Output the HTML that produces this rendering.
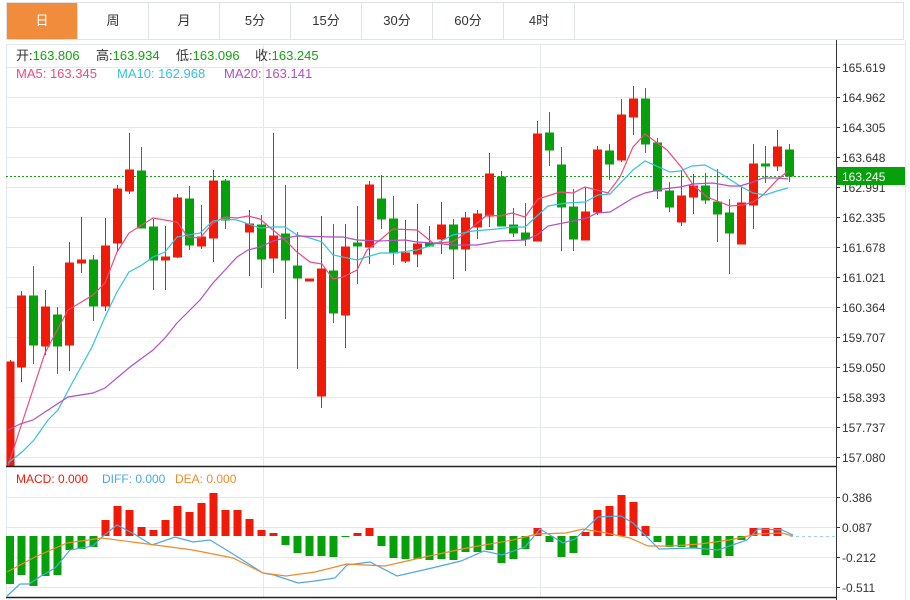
<!DOCTYPE html>
<html><head><meta charset="utf-8"><style>
body{margin:0;width:910px;height:600px;background:#fff;overflow:hidden;font-family:"Liberation Sans","Noto Sans CJK SC",sans-serif}
.tabs{position:absolute;left:6px;top:2px;height:38px;width:898px;border:1px solid #dfe3e8;border-bottom:1px solid #dfe3e8;display:flex;box-sizing:border-box}
.tab{width:70px;border-right:1px solid #dfe3e8;text-align:center;line-height:36px;font-size:13px;color:#333}
.tab.on{background:#f28c3d;color:#fff}
svg{position:absolute;left:0;top:0}
</style></head><body>
<div class="tabs"><div class="tab on">日</div><div class="tab">周</div><div class="tab">月</div><div class="tab">5分</div><div class="tab">15分</div><div class="tab">30分</div><div class="tab">60分</div><div class="tab">4时</div></div>
<svg width="910" height="600" xmlns="http://www.w3.org/2000/svg" font-family="Liberation Sans, Noto Sans CJK SC, sans-serif">
<g stroke="#e3e8ee" stroke-width="1">
<line x1="905.5" y1="40" x2="905.5" y2="600"/>
<line x1="6" y1="44.5" x2="905" y2="44.5"/>
<line x1="6" y1="67.5" x2="836" y2="67.5"/><line x1="6" y1="97.5" x2="836" y2="97.5"/><line x1="6" y1="127.5" x2="836" y2="127.5"/><line x1="6" y1="157.5" x2="836" y2="157.5"/><line x1="6" y1="187.5" x2="836" y2="187.5"/><line x1="6" y1="217.5" x2="836" y2="217.5"/><line x1="6" y1="247.5" x2="836" y2="247.5"/><line x1="6" y1="277.5" x2="836" y2="277.5"/><line x1="6" y1="307.5" x2="836" y2="307.5"/><line x1="6" y1="337.5" x2="836" y2="337.5"/><line x1="6" y1="367.5" x2="836" y2="367.5"/><line x1="6" y1="397.5" x2="836" y2="397.5"/><line x1="6" y1="427.5" x2="836" y2="427.5"/><line x1="6" y1="457.5" x2="836" y2="457.5"/>
<line x1="6" y1="497.5" x2="836" y2="497.5"/><line x1="6" y1="527.5" x2="836" y2="527.5"/><line x1="6" y1="557.5" x2="836" y2="557.5"/><line x1="6" y1="587.5" x2="836" y2="587.5"/>
<line x1="263.5" y1="44" x2="263.5" y2="597"/><line x1="540.5" y1="44" x2="540.5" y2="597"/>
<line x1="6.5" y1="44" x2="6.5" y2="597"/>
</g>
<g font-size="13" fill="#333">
<text x="16" y="60">开:<tspan fill="#13a113">163.806</tspan></text>
<text x="96" y="60">高:<tspan fill="#13a113">163.934</tspan></text>
<text x="176" y="60">低:<tspan fill="#13a113">163.096</tspan></text>
<text x="255" y="60">收:<tspan fill="#13a113">163.245</tspan></text>
<text x="16" y="78" fill="#ee4a7e">MA5: 163.345</text>
<text x="117" y="78" fill="#35c2dd">MA10: 162.968</text>
<text x="224" y="78" fill="#b14fc3">MA20: 163.141</text>
</g>
<line x1="6" y1="176.5" x2="836" y2="176.5" stroke="#13a113" stroke-dasharray="2,2"/>
<g stroke="#f01a08" fill="#f01a08">
<line x1="10.5" y1="360" x2="10.5" y2="466"/><rect x="7" y="362" width="7" height="104"/>
<line x1="21.5" y1="291" x2="21.5" y2="382"/><rect x="17.5" y="296" width="8" height="71"/>
<line x1="45.5" y1="290" x2="45.5" y2="355"/><rect x="41.5" y="307" width="8" height="39"/>
<line x1="69.5" y1="242" x2="69.5" y2="371"/><rect x="65.5" y="263" width="8" height="82"/>
<line x1="81.5" y1="217" x2="81.5" y2="273"/><rect x="77.5" y="260" width="8" height="3"/>
<line x1="105.5" y1="218" x2="105.5" y2="311"/><rect x="101.5" y="246" width="8" height="60"/>
<line x1="117.5" y1="185" x2="117.5" y2="252"/><rect x="113.5" y="189" width="8" height="54"/>
<line x1="129.5" y1="133" x2="129.5" y2="194"/><rect x="125.5" y="170" width="8" height="21"/>
<line x1="165.5" y1="226" x2="165.5" y2="290"/><rect x="161.5" y="257" width="8" height="3"/>
<line x1="177.5" y1="194" x2="177.5" y2="258"/><rect x="173.5" y="198" width="8" height="59"/>
<line x1="201.5" y1="205" x2="201.5" y2="249"/><rect x="197.5" y="237" width="8" height="9"/>
<line x1="213.5" y1="170" x2="213.5" y2="262"/><rect x="209.5" y="181" width="8" height="57"/>
<line x1="249.5" y1="210" x2="249.5" y2="276"/><rect x="245.5" y="224" width="8" height="8"/>
<line x1="273.5" y1="133" x2="273.5" y2="273"/><rect x="269.5" y="236" width="8" height="22"/>
<rect x="305.5" y="279" width="8" height="2"/>
<line x1="321.5" y1="216" x2="321.5" y2="408"/><rect x="317.5" y="269" width="8" height="127"/>
<line x1="345.5" y1="224" x2="345.5" y2="348"/><rect x="341.5" y="247" width="8" height="68"/>
<line x1="369.5" y1="181" x2="369.5" y2="264"/><rect x="365.5" y="185" width="8" height="62"/>
<line x1="405.5" y1="220" x2="405.5" y2="263"/><rect x="401.5" y="253" width="8" height="8"/>
<line x1="417.5" y1="204" x2="417.5" y2="267"/><rect x="413.5" y="244" width="8" height="10"/>
<line x1="441.5" y1="202" x2="441.5" y2="254"/><rect x="437.5" y="225" width="8" height="14"/>
<line x1="465.5" y1="212" x2="465.5" y2="271"/><rect x="461.5" y="218" width="8" height="31"/>
<line x1="477.5" y1="210" x2="477.5" y2="239"/><rect x="473.5" y="214" width="8" height="13"/>
<line x1="489.5" y1="153" x2="489.5" y2="227"/><rect x="485.5" y="174" width="8" height="42"/>
<line x1="537.5" y1="121" x2="537.5" y2="241"/><rect x="533.5" y="134" width="8" height="107"/>
<line x1="585.5" y1="187" x2="585.5" y2="240"/><rect x="581.5" y="212" width="8" height="28"/>
<line x1="597.5" y1="146" x2="597.5" y2="215"/><rect x="593.5" y="150" width="8" height="62"/>
<line x1="621.5" y1="99" x2="621.5" y2="162"/><rect x="617.5" y="115" width="8" height="45"/>
<line x1="633.5" y1="86" x2="633.5" y2="135"/><rect x="629.5" y="99" width="8" height="18"/>
<line x1="681.5" y1="170" x2="681.5" y2="226"/><rect x="677.5" y="196" width="8" height="26"/>
<line x1="693.5" y1="174" x2="693.5" y2="214"/><rect x="689.5" y="186" width="8" height="11"/>
<line x1="741.5" y1="187" x2="741.5" y2="244"/><rect x="737.5" y="203" width="8" height="41"/>
<line x1="753.5" y1="144" x2="753.5" y2="229"/><rect x="749.5" y="164" width="8" height="41"/>
<line x1="777.5" y1="130" x2="777.5" y2="171"/><rect x="773.5" y="147" width="8" height="19"/>
</g>
<g stroke="#06a10a" fill="#06a10a">
<line x1="33.5" y1="266" x2="33.5" y2="364"/><rect x="29.5" y="296" width="8" height="49"/>
<line x1="57.5" y1="307" x2="57.5" y2="374"/><rect x="53.5" y="315" width="8" height="31"/>
<line x1="93.5" y1="255" x2="93.5" y2="321"/><rect x="89.5" y="260" width="8" height="46"/>
<line x1="141.5" y1="147" x2="141.5" y2="228"/><rect x="137.5" y="171" width="8" height="57"/>
<line x1="153.5" y1="219" x2="153.5" y2="290"/><rect x="149.5" y="227" width="8" height="33"/>
<line x1="189.5" y1="186" x2="189.5" y2="250"/><rect x="185.5" y="199" width="8" height="46"/>
<line x1="225.5" y1="179" x2="225.5" y2="229"/><rect x="221.5" y="181" width="8" height="39"/>
<line x1="261.5" y1="215" x2="261.5" y2="288"/><rect x="257.5" y="225" width="8" height="34"/>
<line x1="285.5" y1="185" x2="285.5" y2="319"/><rect x="281.5" y="234" width="8" height="26"/>
<line x1="297.5" y1="232" x2="297.5" y2="369"/><rect x="293.5" y="266" width="8" height="12"/>
<line x1="333.5" y1="224" x2="333.5" y2="323"/><rect x="329.5" y="271" width="8" height="42"/>
<line x1="357.5" y1="206" x2="357.5" y2="284"/><rect x="353.5" y="243" width="8" height="3"/>
<line x1="381.5" y1="175" x2="381.5" y2="229"/><rect x="377.5" y="199" width="8" height="20"/>
<line x1="393.5" y1="196" x2="393.5" y2="265"/><rect x="389.5" y="219" width="8" height="34"/>
<line x1="429.5" y1="226" x2="429.5" y2="247"/><rect x="425.5" y="243" width="8" height="3"/>
<line x1="453.5" y1="219" x2="453.5" y2="279"/><rect x="449.5" y="225" width="8" height="24"/>
<line x1="501.5" y1="171" x2="501.5" y2="226"/><rect x="497.5" y="177" width="8" height="49"/>
<line x1="513.5" y1="208" x2="513.5" y2="237"/><rect x="509.5" y="225" width="8" height="8"/>
<line x1="525.5" y1="203" x2="525.5" y2="246"/><rect x="521.5" y="233" width="8" height="6"/>
<line x1="549.5" y1="112" x2="549.5" y2="166"/><rect x="545.5" y="133" width="8" height="17"/>
<line x1="561.5" y1="147" x2="561.5" y2="251"/><rect x="557.5" y="165" width="8" height="42"/>
<line x1="573.5" y1="189" x2="573.5" y2="251"/><rect x="569.5" y="207" width="8" height="32"/>
<line x1="609.5" y1="144" x2="609.5" y2="180"/><rect x="605.5" y="151" width="8" height="13"/>
<line x1="645.5" y1="88" x2="645.5" y2="153"/><rect x="641.5" y="99" width="8" height="45"/>
<line x1="657.5" y1="138" x2="657.5" y2="199"/><rect x="653.5" y="143" width="8" height="48"/>
<line x1="669.5" y1="182" x2="669.5" y2="212"/><rect x="665.5" y="191" width="8" height="16"/>
<line x1="705.5" y1="173" x2="705.5" y2="204"/><rect x="701.5" y="186" width="8" height="14"/>
<line x1="717.5" y1="169" x2="717.5" y2="242"/><rect x="713.5" y="202" width="8" height="12"/>
<line x1="729.5" y1="199" x2="729.5" y2="274"/><rect x="725.5" y="213" width="8" height="20"/>
<line x1="765.5" y1="146" x2="765.5" y2="183"/><rect x="761.5" y="164" width="8" height="2"/>
<line x1="789.5" y1="144" x2="789.5" y2="182"/><rect x="785.5" y="150" width="8" height="26"/>
</g>
<g fill="none" stroke-width="1.2">
<polyline stroke="#ee4a7e" points="8,466 23,420 45,353 68,310 93,295 105,283 117,252 129,233 153,218 177,222 188,237 200,238 213,223 225,217 237,218 248,216 260,219 273,230 285,240 297,252 310,262 322,264 333,279 343,277 357,270 367,250 380,240 393,229 417,230 433,243 452,242 463,235 487,215 500,216 512,213 525,217 538,199 560,192 573,193 585,187 608,193 620,177 633,147 645,134 667,150 682,168 693,185 707,197 730,206 743,205 753,202 763,195 777,180 788,171"/>
<polyline stroke="#35c2dd" points="8,463 22,452 34,440 48,420 58,410 70,387 92,347 105,317 117,292 129,272 142,265 153,257 165,252 177,237 200,233 213,221 225,219 237,220 260,228 273,227 285,227 297,235 310,238 322,242 333,255 357,260 367,257 380,253 393,253 417,250 433,245 453,235 473,231 497,229 513,227 525,227 548,206 567,203 585,202 598,195 610,194 633,170 645,161 670,172 680,171 692,166 705,165 720,173 740,186 753,193 765,195 777,191 788,188"/>
<polyline stroke="#b14fc3" points="8,430 20,424 33,420 45,412 68,397 93,393 105,388 130,367 153,350 165,338 177,323 200,300 213,283 237,257 248,250 260,247 273,241 285,238 297,236 333,237 343,237 357,240 380,241 405,240 417,242 433,243 453,245 477,245 500,241 525,240 537,235 548,226 573,221 587,218 597,213 610,212 633,198 645,193 663,189 680,187 693,184 713,183 730,186 740,186 753,182 763,178 777,178 788,179"/>
</g>
<line x1="836.5" y1="40" x2="836.5" y2="600" stroke="#333"/>
<line x1="6" y1="466.5" x2="836" y2="466.5" stroke="#222" stroke-width="1.5"/>
<line x1="6" y1="597.5" x2="836" y2="597.5" stroke="#222" stroke-width="1.5"/>
<g stroke="#333"><line x1="836" y1="67.5" x2="840" y2="67.5"/><line x1="836" y1="97.5" x2="840" y2="97.5"/><line x1="836" y1="127.5" x2="840" y2="127.5"/><line x1="836" y1="157.5" x2="840" y2="157.5"/><line x1="836" y1="187.5" x2="840" y2="187.5"/><line x1="836" y1="217.5" x2="840" y2="217.5"/><line x1="836" y1="247.5" x2="840" y2="247.5"/><line x1="836" y1="277.5" x2="840" y2="277.5"/><line x1="836" y1="307.5" x2="840" y2="307.5"/><line x1="836" y1="337.5" x2="840" y2="337.5"/><line x1="836" y1="367.5" x2="840" y2="367.5"/><line x1="836" y1="397.5" x2="840" y2="397.5"/><line x1="836" y1="427.5" x2="840" y2="427.5"/><line x1="836" y1="457.5" x2="840" y2="457.5"/><line x1="836" y1="497.5" x2="840" y2="497.5"/><line x1="836" y1="527.5" x2="840" y2="527.5"/><line x1="836" y1="557.5" x2="840" y2="557.5"/><line x1="836" y1="587.5" x2="840" y2="587.5"/></g>
<g font-size="12" fill="#333">
<text x="842" y="72">165.619</text><text x="842" y="102">164.962</text><text x="842" y="132">164.305</text><text x="842" y="162">163.648</text><text x="842" y="192">162.991</text><text x="842" y="222">162.335</text><text x="842" y="252">161.678</text><text x="842" y="282">161.021</text><text x="842" y="312">160.364</text><text x="842" y="342">159.707</text><text x="842" y="372">159.050</text><text x="842" y="402">158.393</text><text x="842" y="432">157.737</text><text x="842" y="462">157.080</text>
<text x="842" y="502">0.386</text><text x="842" y="532">0.087</text><text x="842" y="562">-0.212</text><text x="842" y="592">-0.511</text>
</g>
<rect x="837" y="167" width="68" height="18" fill="#06a10a"/>
<text x="842" y="181" font-size="12" fill="#fff">163.245</text>
<g font-size="12">
<text x="16" y="483" fill="#f01a08">MACD: 0.000</text>
<text x="102" y="483" fill="#4aa8e8">DIFF: 0.000</text>
<text x="175" y="483" fill="#f08a2a">DEA: 0.000</text>
</g>
<line x1="790" y1="536.5" x2="836" y2="536.5" stroke="#9fd0ef" stroke-dasharray="3,3"/>
<g fill="#06a10a">
<rect x="6" y="536" width="8" height="48"/><rect x="17.5" y="536" width="8" height="39"/><rect x="29.5" y="536" width="8" height="50"/><rect x="41.5" y="536" width="8" height="40"/><rect x="53.5" y="536" width="8" height="39"/><rect x="65.5" y="536" width="8" height="14"/><rect x="77.5" y="536" width="8" height="13"/><rect x="89.5" y="536" width="8" height="11"/>
<rect x="281.5" y="536" width="8" height="9"/><rect x="293.5" y="536" width="8" height="17"/><rect x="305.5" y="536" width="8" height="20"/><rect x="317.5" y="536" width="8" height="20"/><rect x="329.5" y="536" width="8" height="21"/><rect x="341.5" y="536" width="8" height="1"/>
<rect x="377.5" y="536" width="8" height="10"/><rect x="389.5" y="536" width="8" height="22"/><rect x="401.5" y="536" width="8" height="23"/><rect x="413.5" y="536" width="8" height="23"/><rect x="425.5" y="536" width="8" height="24"/><rect x="437.5" y="536" width="8" height="23"/><rect x="449.5" y="536" width="8" height="24"/><rect x="461.5" y="536" width="8" height="16"/><rect x="473.5" y="536" width="8" height="16"/><rect x="485.5" y="536" width="8" height="14"/><rect x="497.5" y="536" width="8" height="27"/><rect x="509.5" y="536" width="8" height="23"/><rect x="521.5" y="536" width="8" height="13"/>
<rect x="545.5" y="536" width="8" height="6"/><rect x="557.5" y="536" width="8" height="21"/><rect x="569.5" y="536" width="8" height="17"/>
<rect x="653.5" y="536" width="8" height="6"/><rect x="665.5" y="536" width="8" height="11"/><rect x="677.5" y="536" width="8" height="11"/><rect x="689.5" y="536" width="8" height="12"/><rect x="701.5" y="536" width="8" height="19"/><rect x="713.5" y="536" width="8" height="22"/><rect x="725.5" y="536" width="8" height="20"/><rect x="737.5" y="536" width="8" height="4"/>
</g>
<g fill="#f01a08">
<rect x="101.5" y="520" width="8" height="16"/><rect x="113.5" y="506" width="8" height="30"/><rect x="125.5" y="510" width="8" height="26"/><rect x="137.5" y="527" width="8" height="9"/><rect x="149.5" y="530" width="8" height="6"/><rect x="161.5" y="520" width="8" height="16"/><rect x="173.5" y="506" width="8" height="30"/><rect x="185.5" y="512" width="8" height="24"/><rect x="197.5" y="503" width="8" height="33"/><rect x="209.5" y="493" width="8" height="43"/><rect x="221.5" y="510" width="8" height="26"/><rect x="233.5" y="510" width="8" height="26"/><rect x="245.5" y="519" width="8" height="17"/><rect x="257.5" y="530" width="8" height="6"/><rect x="269.5" y="533" width="8" height="3"/>
<rect x="353.5" y="533" width="8" height="3"/><rect x="365.5" y="528" width="8" height="8"/>
<rect x="533.5" y="528" width="8" height="8"/>
<rect x="581.5" y="532" width="8" height="4"/><rect x="593.5" y="510" width="8" height="26"/><rect x="605.5" y="506" width="8" height="30"/><rect x="617.5" y="495" width="8" height="41"/><rect x="629.5" y="502" width="8" height="34"/><rect x="641.5" y="526" width="8" height="10"/>
<rect x="749.5" y="528" width="8" height="8"/><rect x="761.5" y="528" width="8" height="8"/><rect x="773.5" y="528" width="8" height="8"/>
</g>
<g fill="none" stroke-width="1.2">
<polyline stroke="#4aa8e8" points="7,596 20,584 29,584 41,576 55,568 70,550 93,546 102,537 117,525 134,534 152,545 175,537 193,542 210,540 233,554 263,573 274,575 298,583 315,581 335,578 347,565 370,562 397,576 432,568 461,561 484,551 502,555 525,547 540,529 563,543 575,539 598,517 621,516 633,523 659,549 694,548 718,550 747,540 758,529 782,530 793,535"/>
<polyline stroke="#f08a2a" points="7,572 35,557 67,543 102,538 140,543 193,550 233,558 263,573 286,576 315,572 347,564 385,566 420,558 467,548 513,540 537,534 566,533 583,529 601,532 630,538 648,546 671,546 700,544 729,540 758,534 782,533 793,536"/>
</g>
</svg>
</body></html>
